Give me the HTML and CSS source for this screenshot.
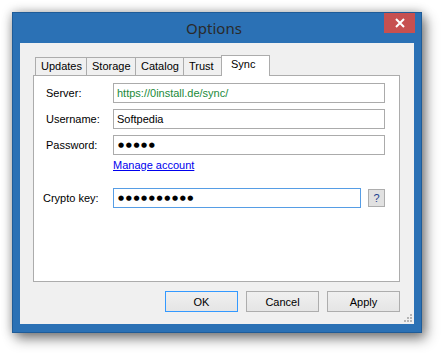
FILE: index.html
```html
<!DOCTYPE html>
<html>
<head>
<meta charset="utf-8">
<link rel="stylesheet" href="styles.css">
</head>
<body>
<div class="window">
  <div class="titlebar">
    <span></span>
    <span class="title">Options</span>
    <button class="close" aria-label="Close">
      <svg width="10" height="10" viewBox="0 0 10 10"><path d="M1 1 L9 9 M9 1 L1 9" stroke="#fff" stroke-width="2"/></svg>
    </button>
  </div>
  <div class="client">
    <div class="tabs">
      <div class="tab t-updates">Updates</div>
      <div class="tab t-storage">Storage</div>
      <div class="tab t-catalog">Catalog</div>
      <div class="tab t-trust">Trust</div>
      <div class="tab active">Sync</div>
    </div>
    <div class="panel">
      <div class="row">
        <label class="lbl">Server:</label>
        <div class="input url">https://0install.de/sync/</div>
      </div>
      <div class="row">
        <label class="lbl">Username:</label>
        <div class="input">Softpedia</div>
      </div>
      <div class="row">
        <label class="lbl">Password:</label>
        <div class="input dots">●●●●●</div>
      </div>
      <div class="row linkrow">
        <span class="lbl"></span>
        <a class="link" href="#">Manage account</a>
      </div>
      <div class="row crypto">
        <label class="lbl lbl-crypto">Crypto key:</label>
        <div class="input dots focus">●●●●●●●●●●</div>
        <button class="help">?</button>
      </div>
    </div>
    <div class="footer">
      <button class="btn default">OK</button>
      <button class="btn">Cancel</button>
      <button class="btn">Apply</button>
    </div>
    <svg class="grip" width="8" height="8" viewBox="0 0 8 8">
      <rect x="6" y="0" width="2" height="2" fill="#b5b5b5"/>
      <rect x="3" y="3" width="2" height="2" fill="#b5b5b5"/>
      <rect x="6" y="3" width="2" height="2" fill="#b5b5b5"/>
      <rect x="0" y="6" width="2" height="2" fill="#b5b5b5"/>
      <rect x="3" y="6" width="2" height="2" fill="#b5b5b5"/>
      <rect x="6" y="6" width="2" height="2" fill="#b5b5b5"/>
    </svg>
  </div>
</div>
</body>
</html>
```

FILE: styles.css
```css
* { box-sizing: border-box; }
html, body { margin: 0; padding: 0; background: #ffffff; }
body {
  width: 442px;
  height: 353px;
  padding: 12px 0 0 12px;
  font-family: "Liberation Sans", Arial, sans-serif;
  font-size: 11px;
  color: #000;
  overflow: hidden;
}
.window {
  width: 410px;
  height: 321px;
  background: #2b71b5;
  border: 1px solid #1f5c98;
  display: flex;
  flex-direction: column;
  box-shadow: 0 0 10px rgba(0,0,0,0.28), 4px 6px 12px rgba(0,0,0,0.45);
}
.titlebar {
  height: 30px;
  display: grid;
  grid-template-columns: 1fr auto 1fr;
  align-items: start;
  padding-right: 6px;
}
.title {
  font-family: "Noto Sans", "Open Sans", sans-serif;
  font-size: 15px;
  line-height: 30px;
  color: #2a2a2a;
}
.close {
  justify-self: end;
  width: 31px;
  height: 20px;
  background: #c75050;
  border: none;
  padding: 0;
  display: flex;
  align-items: center;
  justify-content: center;
}
.client {
  position: relative;
  flex: 1;
  margin: 0 7px 8px 7px;
  background: #f0f0f0;
  padding: 12px 14px 0 13px;
  display: flex;
  flex-direction: column;
}
.tabs {
  display: flex;
  align-items: flex-end;
  height: 20px;
  padding-left: 2px;
  position: relative;
  z-index: 1;
}
.tab {
  height: 18px;
  line-height: 16px;
  padding: 0 0 0 5px;
  border: 1px solid #acacac;
  border-bottom: none;
  background: #f0f0f0;
  margin-right: -1px;
  color: #000;
  white-space: nowrap;
  overflow: hidden;
}
.t-updates { width: 52px; }
.t-storage { width: 50px; }
.t-catalog { width: 49px; }
.t-trust { width: 41px; }
.tab.active {
  width: 49px;
  height: 21px;
  margin-bottom: -1px;
  margin-left: -2px;
  padding-left: 9px;
  background: #ffffff;
  line-height: 16px;
}
.panel {
  height: 207px;
  background: #ffffff;
  border: 1px solid #acacac;
  padding: 7px 14px 0 11px;
  display: flex;
  flex-direction: column;
  gap: 6px;
}
.row {
  display: flex;
  align-items: center;
  height: 20px;
}
.lbl {
  width: 68px;
  flex: none;
  padding-left: 1px;
}
.lbl-crypto { padding-left: 0; margin-left: -2px; width: 70px; }
.input {
  flex: 1;
  height: 20px;
  border: 1px solid #ababab;
  background: #fff;
  padding: 0 3px;
  line-height: 18px;
  white-space: nowrap;
  overflow: hidden;
}
.url { color: #218a3a; }
.dots {
  font-family: "DejaVu Sans", sans-serif;
  font-size: 7px;
  letter-spacing: 1.6px;
  padding-left: 4px;
}
.focus { border-color: #569de5; flex: none; width: 248px; }
.linkrow { height: 14px; margin-top: -3px; }
.link {
  color: #0000ee;
  text-decoration: underline;
}
.crypto { margin-top: 10px; }
.help {
  width: 17px;
  height: 18px;
  margin-left: 7px;
  border: 1px solid #adadad;
  background: #e1e1e1;
  font-family: "Liberation Sans", sans-serif;
  font-size: 11px;
  color: #1f3f8f;
  padding: 0;
  line-height: 16px;
}
.footer {
  display: flex;
  justify-content: flex-end;
  gap: 8px;
  margin-top: 9px;
}
.btn {
  width: 73px;
  height: 21px;
  border: 1px solid #adadad;
  background: linear-gradient(#f0f0f0, #e5e5e5);
  font-family: "Liberation Sans", Arial, sans-serif;
  font-size: 11px;
  color: #000;
  padding: 0;
}
.btn.default { border-color: #3399ff; }
.grip {
  position: absolute;
  right: 2px;
  bottom: 2px;
}
```
